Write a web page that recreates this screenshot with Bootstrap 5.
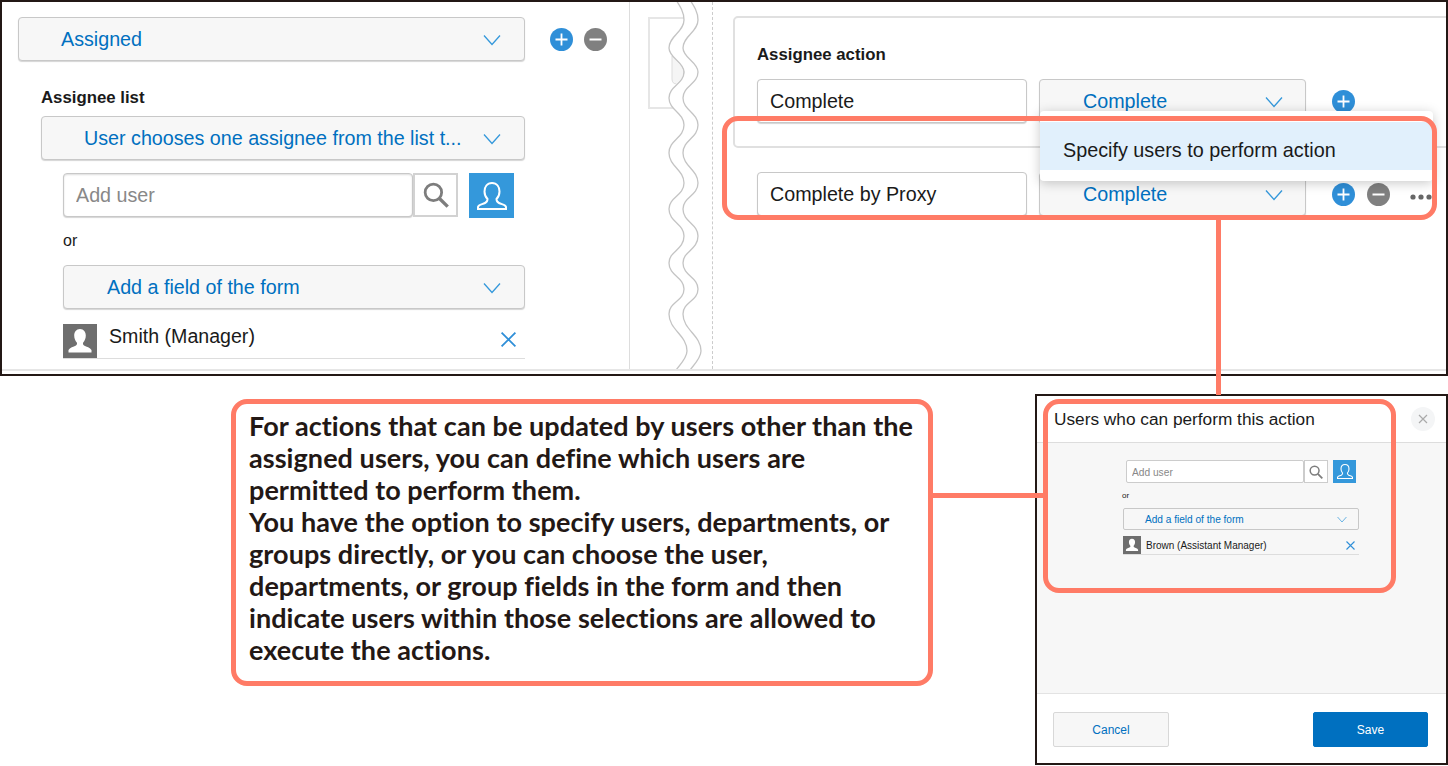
<!DOCTYPE html>
<html lang="en">
<head>
    <meta charset="UTF-8">
    <meta name="viewport" content="width=device-width, initial-scale=1.0">
    <title>Users who can perform this action</title>
    <link href="https://cdn.jsdelivr.net/npm/bootstrap@5.3.3/dist/css/bootstrap.min.css" rel="stylesheet">
    <script src="https://cdn.jsdelivr.net/npm/bootstrap@5.3.3/dist/js/bootstrap.bundle.min.js"></script>
    <style>
        body { margin: 0; background: #fff; font-family: "Liberation Sans", Arial, sans-serif; color: #1a1a1a; }
        .figure-wrap { position: relative; width: 1448px; height: 766px; overflow: hidden; }

        /* top screenshot */
        .shot-top { height: 376px; border: 2px solid #231815; }
        .shot-inner { height: 369px; border-bottom: 2px solid #e6e6e6; overflow: hidden; }
        .col-left { width: 628px; flex: none; padding: 15px 0 0 16px; border-right: 1px solid #ddd; }
        .col-mid { width: 83px; flex: none; position: relative; border-right: 1px dashed #ccc; padding: 15px 0 0 18px; }
        .col-mid .stub { width: 36px; height: 92px; border: 2px solid #e6e6e6; border-right: 0; }
        .col-right { flex: 1; min-width: 0; padding: 14px 0 0 20px; position: relative; }

        .pick-box { display: flex; align-items: center; height: 44px; background: #f7f7f7; border: 1px solid #c8c8c8; box-shadow: 0 1px 1px #d5d5d5; border-radius: 4px; color: #0070c0; font-size: 19.7px; white-space: nowrap; }
        .pick-box svg { flex: none; margin-left: auto; }
        .pick-assigned { width: 507px; padding: 2px 23px 0 42px; }
        .pick-list { width: 484px; margin-left: 23px; padding: 2px 23px 0 42px; }
        .pick-field { width: 462px; margin-left: 45px; padding: 2px 23px 0 43px; }
        .pick-action { width: 267px; padding: 2px 22px 0 43px; }

        .field-label { font-size: 16.8px; line-height: 24px; font-weight: 700; }
        .label-list { margin: 25px 0 6px 23px; }
        .label-action { margin-bottom: 12px; }
        .round-ico { width: 23px; height: 23px; flex: none; }
        .ico-first { margin-left: 25px; }
        .ico-second { margin-left: 11px; }
        .ico-row { margin-left: 14px; }
        .form-control.name-input { width: 270px; height: 44px; border: 1px solid #c8c8c8; box-shadow: 0 1px 1px #d5d5d5; border-radius: 4px; padding: 0 12px; font-size: 19.7px; color: #1a1a1a; }
        .form-control.user-input { width: 350px; height: 44px; border: 1px solid #c8c8c8; box-shadow: inset 0 1px 2px #ddd, 0 1px 1px #d5d5d5; border-radius: 4px; padding: 0 12px; font-size: 19.7px; }
        .form-control::placeholder { color: #888; opacity: 1; }
        .user-line { margin: 13px 0 0 45px; }
        .search-box { width: 45px; height: 44px; background: #fff; border: 2px solid #d2d2d2; flex: none; }
        .user-box { width: 45px; height: 45px; background: #3498db; flex: none; margin-left: 11px; }
        .or-text { font-size: 16px; line-height: 20px; margin: 13px 0 14px 45px; }
        .chosen-row { height: 35px; border-bottom: 1px solid #ddd; font-size: 19.6px; }
        .chosen-left { width: 462px; margin: 15px 0 0 45px; }
        .avatar-box { width: 34px; height: 34px; background: #6e6e6e; flex: none; }

        .action-card { width: 760px; height: 132px; border: 2px solid #e0e0e0; border-radius: 5px; padding: 25px 0 0 22px; }
        .action-row { gap: 12px; }
        .action-second { padding-left: 24px; margin-top: 24px; }
        .more-dots { margin-left: 8px; flex: none; }
        .menu-pop { position: absolute; left: 327px; top: 109px; width: 393px; height: 70px; background: #fff; border-radius: 4px; padding-top: 11px; box-shadow: 0 2px 12px rgba(0,0,0,.22); z-index: 2; }
        .menu-line { height: 48px; background: #e1f0fc; padding-left: 23px; font-size: 19.8px; line-height: 56px; }
        .wave-lines { position: absolute; left: 30px; top: -2px; z-index: 1; }

        /* lower part */
        .note-text { width: 701px; height: 286px; margin: 23px 0 0 231px; padding: 11px 0 11px 18px; flex: none; font-family: Lato, "Liberation Sans", sans-serif; font-weight: 700; font-size: 27px; letter-spacing: .06px; line-height: 32px; color: #231815; white-space: nowrap; }
        .dlg-shot { width: 413px; height: 371px; margin: 18px 0 0 103px; border: 2px solid #231815; flex: none; display: flex; flex-direction: column; }
        .dlg-head { height: 47px; padding: 0 0 0 17px; font-size: 17.25px; line-height: 47px; border-bottom: 1px solid #ddd; position: relative; }
        .dlg-close { position: absolute; right: 11px; top: 11px; width: 24px; height: 24px; border-radius: 50%; background: #f4f5f6; display: flex; align-items: center; justify-content: center; }
        .dlg-body { flex: 1; background: #f7f7f7; padding: 17px 0 0 86px; border-bottom: 1px solid #e3e3e3; }
        .dlg-foot { height: 69px; padding: 18px 18px 0 16px; display: flex; justify-content: space-between; }
        .form-control.mini-input { width: 178px; height: 23px; margin-left: 3px; border: 1px solid #ccc; border-radius: 2px; padding: 1px 5px 0; font-size: 10.2px; }
        .mini-search { width: 24px; height: 23px; background: #fff; border: 1px solid #ccc; flex: none; }
        .mini-user { width: 23px; height: 23px; background: #3498db; margin-left: 5px; flex: none; }
        .mini-or { font-size: 8px; line-height: 10px; margin: 8px 0 7px -1px; }
        .pick-box.mini-pick { width: 236px; height: 22px; font-size: 10.1px; padding: 1px 11px 0 21px; border-radius: 2px; box-shadow: none; background: #f7f7f7; }
        .mini-chosen { width: 236px; height: 19px; margin-top: 6px; font-size: 10px; border-bottom: 1px solid #ddd; }
        .mini-avatar { width: 18px; height: 18px; background: #6e6e6e; flex: none; }
        .mini-name { margin-left: 5px; }
        .btn.foot-btn { width: 116px; height: 35px; padding: 0; font-size: 12px; border-radius: 2px; }
        .btn.foot-cancel { background: #f7f7f7; border: 1px solid #d8d8d8; color: #0070c0; }
        .btn.foot-save { width: 115px; background: #0070c0; border: 1px solid #0070c0; color: #fff; }

        /* orange callouts lie over the screenshots */
        .frame-line { position: absolute; border: 5px solid #ff7b66; border-radius: 16px; z-index: 3; }
        .frame-top { left: 722px; top: 116px; width: 715px; height: 104px; }
        .frame-note { left: 231px; top: 399px; width: 702px; height: 287px; }
        .frame-dlg { left: 1043px; top: 399px; width: 353px; height: 194px; }
        .link-line { position: absolute; background: #ff7b66; z-index: 3; }
        .link-down { left: 1216px; top: 219px; width: 5px; height: 176px; }
        .link-across { left: 932px; top: 493px; width: 112px; height: 5px; }
    </style>
</head>
<body>
<svg width="0" height="0" class="position-absolute">
    <symbol id="chev" viewBox="0 0 18 12"><path d="M1 1.500 9 10.500 17 1.500" fill="none" stroke="#3498db" stroke-width="1.300"/></symbol>
    <symbol id="plus" viewBox="0 0 23 23"><circle cx="11.500" cy="11.500" r="11.500" fill="#2f8fd8"/><path d="M11.500 5.500v12M5.500 11.500h12" stroke="#fff" stroke-width="1.800"/></symbol>
    <symbol id="minus" viewBox="0 0 23 23"><circle cx="11.500" cy="11.500" r="11.500" fill="#808080"/><path d="M5.500 11.500h12" stroke="#fff" stroke-width="2"/></symbol>
    <symbol id="glass" viewBox="0 0 30 30"><circle cx="12" cy="12" r="9.500" fill="none" stroke="#7d7d7d" stroke-width="3.200"/><path d="M19 19 28.500 28.500" stroke="#7d7d7d" stroke-width="3.800"/></symbol>
    <symbol id="person-line" viewBox="0 0 30 28"><path d="M15 1C10 1 7.500 5 7.500 9.500 7.500 13 9 15.500 10.500 17 10.500 19 10 20 8 21 5 22.500 1.500 22.500 1 25V27H29V25C28.500 22.500 25 22.500 22 21 20 20 19.500 19 19.500 17 21 15.500 22.500 13 22.500 9.500 22.500 5 20 1 15 1Z" fill="none" stroke="#fff" stroke-width="2"/></symbol>
    <symbol id="person-solid" viewBox="0 0 34 34"><path d="M17 5c-3.800 0-5.800 3-5.800 6.500 0 3 1.200 5.500 2.600 7 .5 1.100 .2 2.300-.8 2.900C10.500 22.700 6.800 23.500 5.500 26v2.500h23V26c-1.300-2.500-5-3.300-7.500-4.600-1-.6-1.300-1.800-.8-2.900 1.400-1.500 2.600-4 2.600-7C22.800 8 20.800 5 17 5Z" fill="#fff"/></symbol>
    <symbol id="cross" viewBox="0 0 16 16"><path d="M1.500 1.500 14.500 14.500M14.500 1.500 1.500 14.500" stroke="#2f8fd8" stroke-width="1.700"/></symbol>
    <path id="wave-path" d="M16 0C20 6 24 12 24 20 24 32 9 36 9 48 9 58 24 62 24 72 24 84 9 86 9 98 9 110 24 113 24 125 24 138 9 140 9 153 9 166 24 170 24 183 24 196 9 197 9 209 9 222 24 224 24 236 24 250 9 251 9 263 9 276 24 277 24 289 24 301 9 302 9 314 9 330 27 335 27 351 27 360 16 368 12 376"/>
</svg>

<div class="figure-wrap">
    <div class="shot-top">
        <div class="shot-inner d-flex">
            <!-- left column -->
            <div class="col-left">
                <div class="d-flex align-items-center">
                    <div class="pick-box pick-assigned">Assigned<svg width="18" height="12"><use href="#chev"/></svg></div>
                    <svg class="round-ico ico-first" viewBox="0 0 23 23"><use href="#plus"/></svg>
                    <svg class="round-ico ico-second" viewBox="0 0 23 23"><use href="#minus"/></svg>
                </div>
                <div class="field-label label-list">Assignee list</div>
                <div class="pick-box pick-list">User chooses one assignee from the list t...<svg width="18" height="12"><use href="#chev"/></svg></div>
                <div class="d-flex align-items-start user-line">
                    <input type="text" class="form-control user-input" placeholder="Add user">
                    <div class="search-box d-flex align-items-center justify-content-center"><svg width="26" height="26"><use href="#glass"/></svg></div>
                    <div class="user-box d-flex align-items-center justify-content-center"><svg width="30" height="28"><use href="#person-line"/></svg></div>
                </div>
                <div class="or-text">or</div>
                <div class="pick-box pick-field">Add a field of the form<svg width="18" height="12"><use href="#chev"/></svg></div>
                <div class="chosen-row chosen-left d-flex align-items-center">
                    <div class="avatar-box"><svg width="34" height="34"><use href="#person-solid"/></svg></div>
                    <span class="ms-2 ps-1 mb-2">Smith (Manager)</span>
                    <svg class="ms-auto me-2 mb-1" width="17" height="17"><use href="#cross"/></svg>
                </div>
            </div>

            <!-- cut between the two screens -->
            <div class="col-mid">
                <div class="stub"></div>
                <svg class="wave-lines" width="50" height="376" viewBox="0 0 50 376" fill="none">
                    <path d="M12 56V79Q12 84 17 84H20C23 80 24 76 24 72 24 65 17 62 12 56Z" fill="#f5f5f5" stroke="#ddd"/>
                    <use href="#wave-path" x="7" stroke="#fff" stroke-width="12"/>
                    <use href="#wave-path" stroke="#c4c4c4" stroke-width="1.300"/>
                    <use href="#wave-path" x="14" stroke="#c4c4c4" stroke-width="1.300"/>
                </svg>
            </div>

            <!-- right column -->
            <div class="col-right">
                <div class="action-card">
                    <div class="field-label label-action">Assignee action</div>
                    <div class="d-flex align-items-center action-row">
                        <input type="text" class="form-control name-input" value="Complete">
                        <div class="pick-box pick-action">Complete<svg width="18" height="12"><use href="#chev"/></svg></div>
                        <svg class="round-ico ico-row" viewBox="0 0 23 23"><use href="#plus"/></svg>
                    </div>
                </div>
                <div class="d-flex align-items-center action-row action-second">
                    <input type="text" class="form-control name-input" value="Complete by Proxy">
                    <div class="pick-box pick-action">Complete<svg width="18" height="12"><use href="#chev"/></svg></div>
                    <svg class="round-ico ico-row" viewBox="0 0 23 23"><use href="#plus"/></svg>
                    <svg class="round-ico" viewBox="0 0 23 23"><use href="#minus"/></svg>
                    <svg class="more-dots" width="23" height="23" viewBox="0 0 23 23" fill="#666"><circle cx="3" cy="14" r="2.600"/><circle cx="11" cy="14" r="2.600"/><circle cx="19" cy="14" r="2.600"/></svg>
                </div>
                <div class="menu-pop"><div class="menu-line">Specify users to perform action</div></div>
            </div>
        </div>
    </div>

    <div class="d-flex">
        <div class="note-text">For actions that can be updated by users other than the<br>assigned users, you can define which users are<br>permitted to perform them.<br>You have the option to specify users, departments, or<br>groups directly, or you can choose the user,<br>departments, or group fields in the form and then<br>indicate users within those selections are allowed to<br>execute the actions.</div>

        <div class="dlg-shot">
            <div class="dlg-head">Users who can perform this action
                <span class="dlg-close"><svg width="10" height="10" viewBox="0 0 10 10"><path d="M1 1 9 9M9 1 1 9" stroke="#aaa" stroke-width="1.200"/></svg></span>
            </div>
            <div class="dlg-body">
                <div class="d-flex">
                    <input type="text" class="form-control mini-input" placeholder="Add user">
                    <div class="mini-search d-flex align-items-center justify-content-center"><svg width="14" height="14"><use href="#glass"/></svg></div>
                    <div class="mini-user d-flex align-items-center justify-content-center"><svg width="16" height="15"><use href="#person-line"/></svg></div>
                </div>
                <div class="mini-or">or</div>
                <div class="pick-box mini-pick">Add a field of the form<svg width="10" height="7"><use href="#chev"/></svg></div>
                <div class="mini-chosen d-flex align-items-center">
                    <div class="mini-avatar"><svg width="18" height="18"><use href="#person-solid"/></svg></div>
                    <span class="mini-name">Brown (Assistant Manager)</span>
                    <svg class="ms-auto me-1" width="9" height="9" viewBox="0 0 9 9"><path d="M.5 .5 8.500 8.500M8.500 .5 .5 8.500" stroke="#2f8fd8" stroke-width="1.100"/></svg>
                </div>
            </div>
            <div class="dlg-foot">
                <button type="button" class="btn foot-btn foot-cancel">Cancel</button>
                <button type="button" class="btn foot-btn foot-save">Save</button>
            </div>
        </div>
    </div>

    <div class="frame-line frame-top"></div>
    <div class="frame-line frame-note"></div>
    <div class="frame-line frame-dlg"></div>
    <div class="link-line link-down"></div>
    <div class="link-line link-across"></div>
</div>
</body>
</html>
